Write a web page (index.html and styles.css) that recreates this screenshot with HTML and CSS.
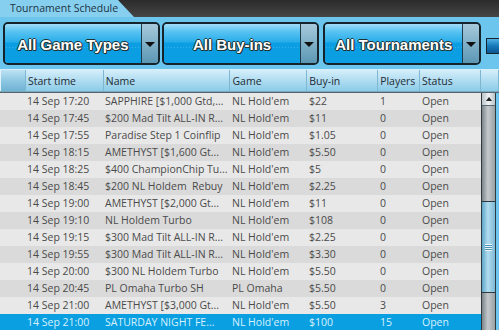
FILE: index.html
```html
<!DOCTYPE html>
<html>
<head>
    <title>Tournament Schedule</title>
    <link rel="stylesheet" href="styles.css">
</head>
<body>
    <div class="topbar">
        <div class="tab">Tournament Schedule</div>
    </div>

    <div class="filters">
        <div class="dropdown dd-game">
            <div class="dd-label">All Game Types</div>
            <div class="dd-arrow"><span class="caret"></span></div>
        </div>
        <div class="dropdown dd-buyin">
            <div class="dd-label">All Buy-ins</div>
            <div class="dd-arrow"><span class="caret"></span></div>
        </div>
        <div class="dropdown dd-tourn">
            <div class="dd-label">All Tournaments</div>
            <div class="dd-arrow"><span class="caret"></span></div>
        </div>
        <div class="side-btn"></div>
    </div>

    <div class="strip"></div>

    <div class="grid-wrap">
        <table class="schedule">
            <colgroup>
                <col style="width: 25px">
                <col style="width: 78px">
                <col style="width: 127px">
                <col style="width: 77px">
                <col style="width: 71px">
                <col style="width: 42px">
                <col style="width: 61px">
                <col style="width: 18px">
            </colgroup>
            <thead>
                <tr>
                    <th class="first"></th>
                    <th>Start time</th>
                    <th>Name</th>
                    <th>Game</th>
                    <th>Buy-in</th>
                    <th>Players</th>
                    <th>Status</th>
                    <th></th>
                </tr>
            </thead>
        </table>

        <div class="body-wrap">
            <table class="schedule rows">
                <colgroup>
                    <col style="width: 25px">
                    <col style="width: 78px">
                    <col style="width: 127px">
                    <col style="width: 77px">
                    <col style="width: 71px">
                    <col style="width: 42px">
                    <col style="width: 61px">
                </colgroup>
                <tbody>
                    <tr><td></td><td>14 Sep 17:20</td><td>SAPPHIRE [$1,000 Gtd,...</td><td>NL Hold'em</td><td>$22</td><td>1</td><td>Open</td></tr>
                    <tr><td></td><td>14 Sep 17:45</td><td>$200 Mad Tilt ALL-IN R...</td><td>NL Hold'em</td><td>$11</td><td>0</td><td>Open</td></tr>
                    <tr><td></td><td>14 Sep 17:55</td><td>Paradise Step 1 Coinflip</td><td>NL Hold'em</td><td>$1.05</td><td>0</td><td>Open</td></tr>
                    <tr><td></td><td>14 Sep 18:15</td><td>AMETHYST [$1,600 Gt...</td><td>NL Hold'em</td><td>$5.50</td><td>0</td><td>Open</td></tr>
                    <tr><td></td><td>14 Sep 18:25</td><td>$400 ChampionChip Tu...</td><td>NL Hold'em</td><td>$5</td><td>0</td><td>Open</td></tr>
                    <tr><td></td><td>14 Sep 18:45</td><td>$200 NL Holdem&nbsp; Rebuy</td><td>NL Hold'em</td><td>$2.25</td><td>0</td><td>Open</td></tr>
                    <tr><td></td><td>14 Sep 19:00</td><td>AMETHYST [$2,000 Gt...</td><td>NL Hold'em</td><td>$11</td><td>0</td><td>Open</td></tr>
                    <tr><td></td><td>14 Sep 19:10</td><td>NL Holdem Turbo</td><td>NL Hold'em</td><td>$108</td><td>0</td><td>Open</td></tr>
                    <tr><td></td><td>14 Sep 19:15</td><td>$300 Mad Tilt ALL-IN R...</td><td>NL Hold'em</td><td>$2.25</td><td>0</td><td>Open</td></tr>
                    <tr><td></td><td>14 Sep 19:55</td><td>$300 Mad Tilt ALL-IN R...</td><td>NL Hold'em</td><td>$3.30</td><td>0</td><td>Open</td></tr>
                    <tr><td></td><td>14 Sep 20:00</td><td>$300 NL Holdem Turbo</td><td>NL Hold'em</td><td>$5.50</td><td>0</td><td>Open</td></tr>
                    <tr><td></td><td>14 Sep 20:45</td><td>PL Omaha Turbo SH</td><td>PL Omaha</td><td>$5.50</td><td>0</td><td>Open</td></tr>
                    <tr><td></td><td>14 Sep 21:00</td><td>AMETHYST [$3,000 Gt...</td><td>NL Hold'em</td><td>$5.50</td><td>3</td><td>Open</td></tr>
                    <tr class="selected"><td></td><td>14 Sep 21:00</td><td>SATURDAY NIGHT FE...</td><td>NL Hold'em</td><td>$100</td><td>15</td><td>Open</td></tr>
                </tbody>
            </table>

            <div class="scrollbar">
                <div class="sb-up"><span class="sb-caret"></span></div>
                <div class="sb-track">
                    <div class="sb-thumb"><span class="grip"></span></div>
                </div>
            </div>
        </div>
    </div>
</body>
</html>
```

FILE: styles.css
```css
html, body {
    margin: 0;
    padding: 0;
}
body {
    width: 499px;
    height: 330px;
    overflow: hidden;
    background-color: #6cc5ed;
    font-family: "Open Sans", "DejaVu Sans", sans-serif;
}

/* top bar with tab */
.topbar {
    height: 17px;
    background: linear-gradient(#2b2b2b, #464646);
}
.tab {
    width: 134px;
    height: 17px;
    box-sizing: border-box;
    padding: 1px 0 0 10px;
    background-color: #86cfef;
    clip-path: polygon(0 0, 118px 0, 134px 17px, 0 17px);
    color: #1e3442;
    font-size: 10.5px;
    line-height: 15px;
}

/* filter dropdowns */
.filters {
    display: flex;
    align-items: flex-start;
    padding: 5px 0 0 3px;
    height: 43px;
}
.dropdown {
    display: flex;
    height: 43px;
    box-sizing: border-box;
    border: 2px solid #17232b;
    border-radius: 5px;
    overflow: hidden;
}
.dd-game { width: 158px; margin-right: 2px; }
.dd-buyin { width: 159px; margin-right: 4px; }
.dd-tourn { width: 159px; margin-right: 5px; }
.dd-label {
    flex: 1;
    display: flex;
    align-items: center;
    justify-content: center;
    padding-top: 1px;
    color: #fff;
    font-family: "Liberation Sans", Arial, sans-serif;
    font-weight: bold;
    font-size: 15px;
    text-shadow: -1px 0 #233, 1px 0 #233, 0 -1px #233, 0 1px #233, 1px 1px #233;
    background:
        radial-gradient(circle, rgba(255,255,255,0.18) 0.6px, transparent 0.8px) 0 22px / 3px 3px repeat-x,
        linear-gradient(#a2def8 0%, #5cc4f2 18%, #29aeea 45%, #0b9ee2 50%, #0b9ee2 100%);
}
.dd-arrow {
    width: 16px;
    border-left: 1px solid #1f3a48;
    display: flex;
    align-items: center;
    justify-content: center;
    background: linear-gradient(#a8cadb, #7fb0c8 50%, #5d97b4);
}
.caret {
    width: 0;
    height: 0;
    border-left: 5px solid transparent;
    border-right: 5px solid transparent;
    border-top: 5px solid #111;
    margin-top: 2px;
}
.side-btn {
    margin-top: 16px;
    width: 12px;
    height: 14px;
    border: 1px solid #17232b;
    border-right: none;
    background: linear-gradient(#4fb0e4, #1679b8 50%, #0b5690);
}

.strip {
    height: 5px;
    border-bottom: 1px solid #d6eef9;
    box-sizing: border-box;
    height: 5px;
}

/* table */
.grid-wrap {
    width: 499px;
}
.schedule {
    border-collapse: collapse;
    table-layout: fixed;
    font-size: 10.5px;
}
.schedule th {
    height: 21px;
    padding: 0 0 0 2px;
    text-align: left;
    font-weight: normal;
    color: #1f2b33;
    background: linear-gradient(#d4eef9, #b3def2 45%, #8ccbe7);
    border-right: 1px solid #7fb7d1;
    border-left: 1px solid #e2f4fb;
    border-bottom: 1px solid #7aa8bf;
    white-space: nowrap;
    overflow: hidden;
}
.schedule th.first {
    background: linear-gradient(#bde2f2, #8fc8e2 50%, #6fb3d3);
}
.body-wrap {
    display: flex;
    height: 238px;
    border-top: 1px solid #55646c;
}
.rows {
    width: 481px;
}
.rows td {
    height: 17px;
    padding: 0 0 0 2px;
    color: #4a4a4a;
    white-space: nowrap;
    overflow: hidden;
    line-height: 17px;
}
.rows tr:nth-child(odd) td { background-color: #e8e8e8; }
.rows tr:nth-child(even) td { background-color: #dadada; }
.rows tr.selected td {
    background-color: #0a9fe1;
    color: #d9f1fd;
}

/* scrollbar */
.scrollbar {
    width: 15px;
    box-sizing: border-box;
    border-left: 1px solid #2e3a40;
    border-right: 1px solid #2e3a40;
    display: flex;
    flex-direction: column;
}
.sb-up {
    height: 12px;
    border-bottom: 1px solid #5a6a72;
    background: linear-gradient(90deg, #b9c4ca, #eef2f4 50%, #b9c4ca);
    display: flex;
    align-items: center;
    justify-content: center;
}
.sb-caret {
    width: 0;
    height: 0;
    border-left: 3px solid transparent;
    border-right: 3px solid transparent;
    border-bottom: 4px solid #222;
}
.sb-track {
    flex: 1;
    padding-top: 95px;
    background: linear-gradient(90deg, #7c858a, #c3c9cc 45%, #9aa2a6);
}
.sb-thumb {
    height: 92px;
    box-sizing: border-box;
    border-top: 1px solid #2e3a40;
    border-bottom: 1px solid #2e3a40;
    background: linear-gradient(90deg, #5da6c8, #b2dcef 45%, #7dbad6);
    display: flex;
    align-items: center;
    justify-content: center;
}
.grip {
    width: 7px;
    height: 7px;
    background: repeating-linear-gradient(#e8f6fc 0, #e8f6fc 1px, #4f93b4 1px, #4f93b4 2px);
}
```
